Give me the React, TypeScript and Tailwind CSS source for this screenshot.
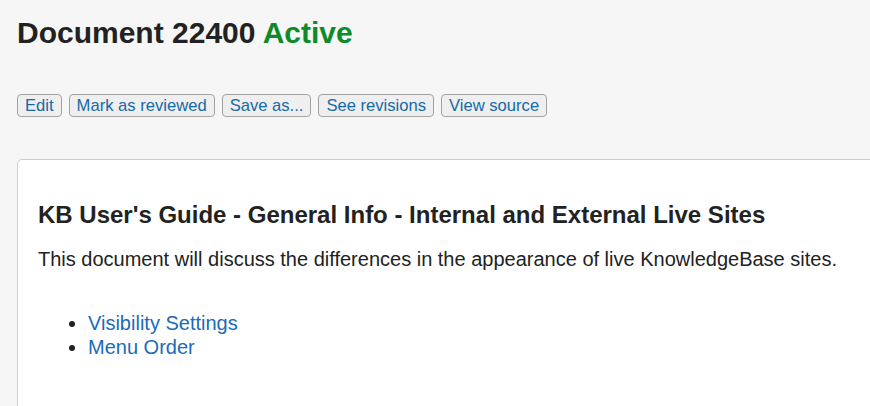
export default function App() {
  const actions = ["Edit", "Mark as reviewed", "Save as...", "See revisions", "View source"];
  return (
    <div className="min-h-[406px] bg-[#f6f6f6] pl-[17px] pt-[15px] font-['Liberation_Sans',Arial,sans-serif] text-[#222] overflow-hidden">
      <h1 className="m-0 text-[30px] leading-[36px] font-bold">
        Document 22400 <span className="text-[#0e8a2a]">Active</span>
      </h1>

      <div className="mt-[43px] flex gap-[7px]">
        {actions.map(a => (
          <button key={a}
            className="h-[23px] px-[7px] rounded-[4px] border border-[#a3a3a3] bg-[#efefef] text-[16.6px] leading-[20px] text-[#1569a6]">
            {a}
          </button>
        ))}
      </div>

      <div className="mt-[42px] -mr-[20px] h-[260px] rounded-tl-[5px] border border-[#cfcfcf] bg-white pl-[20px] pt-[41px]">
        <h2 className="m-0 text-[24px] leading-[28px] font-bold">
          KB User's Guide - General Info - Internal and External Live Sites
        </h2>
        <p className="mt-[18px] text-[20px] leading-[24px]">
          This document will discuss the differences in the appearance of live KnowledgeBase sites.
        </p>
        <ul className="mt-[40px] ml-[50px] list-disc text-[20px] leading-[24px]">
          <li><a href="#" className="text-[#1a6bb8]">Visibility Settings</a></li>
          <li><a href="#" className="text-[#1a6bb8]">Menu Order</a></li>
        </ul>
      </div>
    </div>
  );
}
